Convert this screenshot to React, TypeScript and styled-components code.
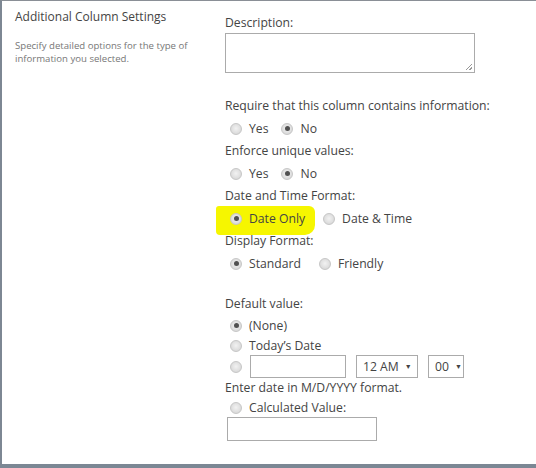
import styled, { createGlobalStyle } from 'styled-components';

const GlobalStyle = createGlobalStyle`
	html, body {
		margin: 0;
		padding: 0;
		background: #ffffff;
	}
	body {
		font-family: 'Open Sans', 'Liberation Sans', sans-serif;
		color: #444444;
	}
`;

const Frame = styled.div`
	box-sizing: border-box;
	width: 536px;
	height: 468px;
	border-top: 1px solid #8a8f96;
	border-left: 2px solid #7d8793;
	border-bottom: 4px solid #7b8794;
	display: flex;
	background: #ffffff;
	overflow: hidden;
`;

const SectionInfo = styled.div`
	width: 210px;
	padding: 8px 0 0 13px;
	box-sizing: border-box;
`;

const SectionTitle = styled.div`
	font-size: 12px;
	line-height: 16px;
	color: #444444;
`;

const SectionDesc = styled.div`
	margin-top: 14px;
	font-size: 9.6px;
	line-height: 13px;
	color: #777777;
`;

const Fields = styled.div`
	padding: 12px 0 0 13px;
	display: flex;
	flex-direction: column;
	font-size: 12.2px;
`;

const Label = styled.div<{ $top?: number; $h?: number }>`
	line-height: ${p => p.$h || 22}px;
	height: ${p => p.$h || 22}px;
	margin-top: ${p => p.$top || 0}px;
	white-space: nowrap;
`;

const TextArea = styled.div`
	box-sizing: border-box;
	width: 250px;
	height: 40px;
	border: 1px solid #ababab;
	position: relative;

	&::after {
		content: '';
		position: absolute;
		right: 2px;
		bottom: 2px;
		width: 6px;
		height: 6px;
		background: linear-gradient(
			135deg,
			transparent 45%,
			#999 45%,
			#999 55%,
			transparent 55%,
			transparent 75%,
			#999 75%,
			#999 85%,
			transparent 85%
		);
	}
`;

const RadioRow = styled.div<{ $h?: number; $gap?: number }>`
	display: flex;
	align-items: center;
	height: ${p => p.$h || 23}px;
	padding-left: 5px;
	gap: ${p => p.$gap || 13}px;
	white-space: nowrap;
`;

const Option = styled.label<{ $highlight?: boolean }>`
	display: flex;
	align-items: center;
	gap: 7px;
	${p =>
		p.$highlight &&
		`
		background: #f6f600;
		margin: -4px -10px -8px -14px;
		padding: 4px 10px 8px 14px;
		border-radius: 3px 6px 10px 4px;
	`}
`;

const Radio = styled.span<{ $checked?: boolean }>`
	box-sizing: border-box;
	width: 12px;
	height: 12px;
	border-radius: 50%;
	border: 1px solid #c6c6c6;
	background: radial-gradient(circle at 50% 45%, #f2f2f2 0%, #e0e0e0 55%, #cfcfcf 100%);
	display: flex;
	align-items: center;
	justify-content: center;
	flex-shrink: 0;

	&::after {
		content: '';
		width: 5px;
		height: 5px;
		border-radius: 50%;
		background: ${p => (p.$checked ? '#505050' : 'transparent')};
	}
`;

const DateInput = styled.div`
	box-sizing: border-box;
	width: 96px;
	height: 23px;
	border: 1px solid #ababab;
	margin-left: 1px;
`;

const FakeSelect = styled.div<{ $w: number }>`
	box-sizing: border-box;
	width: ${p => p.$w}px;
	height: 23px;
	border: 1px solid #ababab;
	display: flex;
	align-items: center;
	padding-left: 6px;
	gap: 6px;
	font-size: 12.2px;

	span {
		font-size: 7px;
		color: #444;
	}
`;

const CalcInput = styled.div`
	box-sizing: border-box;
	width: 150px;
	height: 24px;
	border: 1px solid #ababab;
	margin-left: 2px;
`;

export default function App() {
	return (
		<>
			<GlobalStyle />
			<Frame>
				<SectionInfo>
					<SectionTitle>Additional Column Settings</SectionTitle>
					<SectionDesc>
						Specify detailed options for the type of
						<br />
						information you selected.
					</SectionDesc>
				</SectionInfo>
				<Fields>
					<Label $h={20}>Description:</Label>
					<TextArea />
					<Label $top={22}>Require that this column contains information:</Label>
					<RadioRow>
						<Option>
							<Radio />
							Yes
						</Option>
						<Option>
							<Radio $checked />
							No
						</Option>
					</RadioRow>
					<Label>Enforce unique values:</Label>
					<RadioRow>
						<Option>
							<Radio />
							Yes
						</Option>
						<Option>
							<Radio $checked />
							No
						</Option>
					</RadioRow>
					<Label>Date and Time Format:</Label>
					<RadioRow $gap={18}>
						<Option $highlight>
							<Radio $checked />
							Date Only
						</Option>
						<Option>
							<Radio />
							Date &amp; Time
						</Option>
					</RadioRow>
					<Label>Display Format:</Label>
					<RadioRow $gap={18}>
						<Option>
							<Radio $checked />
							Standard
						</Option>
						<Option>
							<Radio />
							Friendly
						</Option>
					</RadioRow>
					<Label $top={18}>Default value:</Label>
					<RadioRow $h={21}>
						<Option>
							<Radio $checked />
							(None)
						</Option>
					</RadioRow>
					<RadioRow $h={19}>
						<Option>
							<Radio />
							Today&rsquo;s Date
						</Option>
					</RadioRow>
					<RadioRow $gap={10}>
						<Option>
							<Radio />
							<DateInput />
						</Option>
						<FakeSelect $w={62}>
							12 AM <span>&#9660;</span>
						</FakeSelect>
						<FakeSelect $w={36}>
							00 <span>&#9660;</span>
						</FakeSelect>
					</RadioRow>
					<Label $h={20}>Enter date in M/D/YYYY format.</Label>
					<RadioRow $h={19}>
						<Option>
							<Radio />
							Calculated Value:
						</Option>
					</RadioRow>
					<CalcInput />
				</Fields>
			</Frame>
		</>
	);
}
